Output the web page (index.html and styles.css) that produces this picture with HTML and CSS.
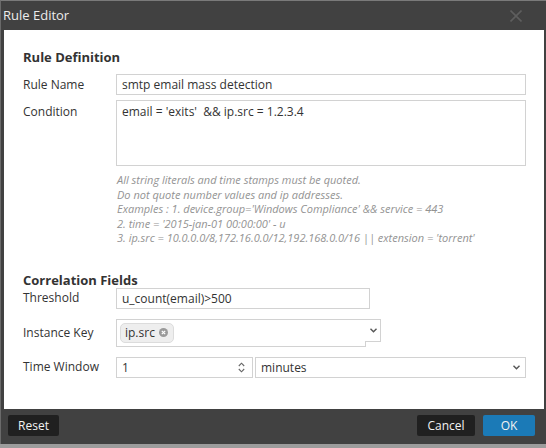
FILE: index.html
```html
<!DOCTYPE html>
<html>
<head>
<meta charset="utf-8">
<link rel="stylesheet" href="styles.css">
</head>
<body>
<div class="dialog">
  <div class="titlebar">
    <span class="title">Rule Editor</span>
    <svg class="close" width="12" height="12" viewBox="0 0 12 12"><path d="M0.5 0.5 L11.5 11.5 M11.5 0.5 L0.5 11.5" stroke="#5e5e5e" stroke-width="1.6"/></svg>
  </div>
  <div class="main">
    <h2 class="section first">Rule Definition</h2>
    <div class="row">
      <div class="label">Rule Name</div>
      <div class="field text wide">smtp email mass detection</div>
    </div>
    <div class="row top">
      <div class="label cond">Condition</div>
      <div class="field area wide">email = 'exits'  &amp;&amp; ip.src = 1.2.3.4</div>
    </div>
    <div class="help">
      <div class="help-line">All string literals and time stamps must be quoted.</div>
      <div class="help-line">Do not quote number values and ip addresses.</div>
      <div class="help-line">Examples : 1. device.group='Windows Compliance' &amp;&amp; service = 443</div>
      <div class="help-line">2. time = '2015-jan-01 00:00:00' - u</div>
      <div class="help-line">3. ip.src = 10.0.0.0/8,172.16.0.0/12,192.168.0.0/16 || extension = 'torrent'</div>
    </div>
    <h2 class="section second">Correlation Fields</h2>
    <div class="row">
      <div class="label">Threshold</div>
      <div class="field text thresh">u_count(email)&gt;500</div>
    </div>
    <div class="row gap">
      <div class="label">Instance Key</div>
      <div class="ikey">
        <span class="chip">ip.src<svg class="chip-x" width="9" height="9" viewBox="0 0 9 9"><circle cx="4.5" cy="4.5" r="4.5" fill="#9a9a9a"/><path d="M2.8 2.8 L6.2 6.2 M6.2 2.8 L2.8 6.2" stroke="#fff" stroke-width="1.2"/></svg></span>
        <div class="ikey-toggle"><svg width="7" height="5" viewBox="0 0 7 5"><path d="M0.5 0.8 L3.5 3.8 L6.5 0.8" fill="none" stroke="#555" stroke-width="1.4"/></svg></div>
      </div>
    </div>
    <div class="row gap">
      <div class="label">Time Window</div>
      <div class="tw">
        <div class="field text num">1<svg class="spin" width="7" height="11" viewBox="0 0 7 11"><path d="M0.8 4 L3.5 1.2 L6.2 4 M0.8 7 L3.5 9.8 L6.2 7" fill="none" stroke="#666" stroke-width="1.1"/></svg></div>
        <div class="field text sel">minutes<svg class="chev" width="7" height="5" viewBox="0 0 7 5"><path d="M0.5 0.8 L3.5 3.8 L6.5 0.8" fill="none" stroke="#555" stroke-width="1.4"/></svg></div>
      </div>
    </div>
  </div>
  <div class="footer">
    <button class="btn dark">Reset</button>
    <div class="right">
      <button class="btn dark cancel">Cancel</button>
      <button class="btn primary">OK</button>
    </div>
  </div>
</div>
</body>
</html>
```
FILE: styles.css
```css
html, body {
  margin: 0;
  padding: 0;
}
body {
  width: 546px;
  height: 448px;
  background: #9c9c9c;
  font-family: "Open Sans", "DejaVu Sans", sans-serif;
  overflow: hidden;
}
.dialog {
  width: 546px;
  height: 444px;
  box-sizing: border-box;
  background: #414141;
  border-top: 1px solid #7a7a7a;
  border-left: 1px solid #6a6a6a;
  display: flex;
  flex-direction: column;
}
.titlebar {
  height: 29px;
  flex: none;
  display: flex;
  align-items: center;
  justify-content: space-between;
  padding: 0 24px 0 2px;
}
.title {
  color: #ececec;
  font-size: 13px;
  line-height: 29px;
}
.close {
  display: block;
  margin-top: 1px;
}
.main {
  height: 379px;
  flex: none;
  margin: 0 2px 0 3px;
  background: #fff;
  box-sizing: border-box;
  padding: 18px 18px 0 19px;
  color: #333;
  font-size: 12px;
}
.section {
  margin: 0;
  font-size: 13px;
  font-weight: bold;
  color: #333;
  line-height: 18px;
}
.section.first {
  margin-bottom: 8px;
}
.section.second {
  margin-top: 26px;
  line-height: 16px;
  margin-bottom: 0;
}
.row {
  display: flex;
  align-items: center;
}
.row.top {
  align-items: flex-start;
  margin-top: 5px;
}
.row.gap {
  margin-top: 10px;
}
.label {
  width: 93px;
  flex: none;
  line-height: 18px;
}
.label.cond {
  padding-top: 3px;
}
.field {
  box-sizing: border-box;
  border: 1px solid #d2d2d2;
  background: #fff;
  color: #333;
  font-size: 12px;
  white-space: pre;
}
.text {
  height: 21px;
  line-height: 19px;
  padding-left: 5px;
}
.wide {
  width: 410px;
}
.area {
  height: 66px;
  line-height: 17px;
  padding: 2px 5px;
}
.help {
  margin: 7px 0 0 94px;
  font-size: 11px;
  font-style: italic;
  color: #939393;
  line-height: 14.5px;
}
.help-line {
  white-space: pre;
}
.thresh {
  width: 254px;
}
.ikey {
  position: relative;
  box-sizing: border-box;
  width: 250px;
  height: 28px;
  border: 1px solid #d2d2d2;
  padding: 2px 3px;
  display: flex;
  align-items: center;
}
.chip {
  display: flex;
  align-items: center;
  height: 20px;
  box-sizing: border-box;
  padding: 0 5px 0 4px;
  background: #eeeeee;
  border: 1px solid #dcdcdc;
  border-radius: 5px;
  font-size: 12px;
  color: #333;
}
.chip-x {
  margin-left: 4px;
}
.ikey-toggle {
  position: absolute;
  top: -1px;
  left: 248px;
  width: 16px;
  height: 23px;
  box-sizing: border-box;
  background: #fff;
  border: 1px solid #d2d2d2;
  border-left: none;
  display: flex;
  align-items: center;
  justify-content: flex-start;
  padding-left: 5px;
}
.ikey-toggle svg,
.chev,
.spin {
  display: block;
}
.tw {
  display: flex;
  gap: 2px;
}
.num {
  width: 137px;
  display: flex;
  justify-content: space-between;
  align-items: center;
  padding-right: 7px;
}
.sel {
  width: 271px;
  display: flex;
  justify-content: space-between;
  align-items: center;
  padding-right: 5px;
}
.footer {
  height: 35px;
  flex: none;
  box-sizing: border-box;
  padding: 6px 11px 0 7px;
  display: flex;
  justify-content: space-between;
  align-items: flex-start;
}
.right {
  display: flex;
  gap: 8px;
}
.btn {
  height: 21px;
  border: none;
  border-radius: 2px;
  color: #f2f2f2;
  font-family: "Open Sans", "DejaVu Sans", sans-serif;
  font-size: 12px;
  padding: 0;
  width: 51px;
  line-height: 21px;
}
.btn.dark {
  background: #202020;
}
.btn.cancel {
  width: 58px;
}
.btn.primary {
  background: #1b7ab7;
  width: 52px;
}
```
